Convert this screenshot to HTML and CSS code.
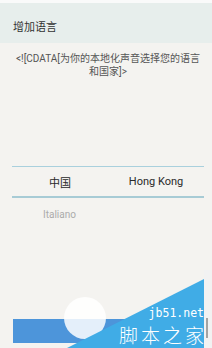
FILE: index.html
```html
<!DOCTYPE html>
<html lang="zh-CN">
<head>
<meta charset="utf-8">
<title>增加语言</title>
<link rel="stylesheet" href="styles.css">
</head>
<body>
<div class="app">
  <div class="topstrip"></div>
  <header class="bar"><h1 class="title">增加语言</h1></header>
  <p class="hint">&lt;![CDATA[为你的本地化声音选择您的语言<br>和国家]&gt;</p>
  <div class="picker">
    <div class="cell">中国</div>
    <div class="cell">Hong Kong</div>
  </div>
  <div class="option">Italiano</div>
  <button class="ok" aria-label="确定"></button>
</div>
<div class="watermark">
  <svg class="wm-shape" width="212" height="348" viewBox="0 0 212 348">
    <rect x="204" y="270" width="8" height="78" fill="#f2f2f2"/>
    <rect x="206.5" y="318" width="1" height="20" fill="#555"/>
    <circle cx="85" cy="318" r="21" fill="#ffffff" fill-opacity="0.85"/>
    <polygon points="204,279 204,348 67,348" fill="#40ace6"/>
  </svg>
  <span class="wm-url">jb51.net</span>
  <span class="wm-name">脚本之家</span>
</div>
</body>
</html>
```
FILE: styles.css
```css
html, body {
  margin: 0;
  padding: 0;
}
body {
  width: 212px;
  height: 348px;
  overflow: hidden;
  background: #f4f3f0;
  font-family: Roboto, "Noto Sans CJK SC", sans-serif;
  position: relative;
}
.app {
  display: flex;
  flex-direction: column;
  height: 348px;
}
.topstrip {
  height: 3px;
  background: #fafafa;
}
.bar {
  height: 40px;
  background: #e7eeec;
  display: flex;
  align-items: flex-end;
  padding: 0 13px 9px;
  box-sizing: border-box;
}
.title {
  margin: 0;
  font-size: 11px;
  line-height: 13px;
  font-weight: 400;
  color: #333;
}
.hint {
  margin: 9px 8px 0 12px;
  font-size: 10px;
  line-height: 13px;
  color: #555;
  text-align: center;
}
.picker {
  margin: 88px 8px 0 12px;
  display: flex;
  border-top: 1px solid #a9d0dd;
  border-bottom: 2px solid #a7cbd5;
  height: 29px;
  align-items: center;
}
.cell {
  flex: 1;
  text-align: center;
  font-size: 11px;
  color: #2a2a2a;
}
.option {
  margin: 11px 0 0 43px;
  font-size: 10px;
  line-height: 12px;
  color: #ababab;
}
.ok {
  margin: auto 13px 5px;
  height: 24px;
  border: none;
  padding: 0;
  background: #4d95da;
}
.watermark {
  position: absolute;
  left: 0;
  top: 0;
  width: 212px;
  height: 348px;
  pointer-events: none;
}
.wm-shape {
  display: block;
}
.wm-url {
  position: absolute;
  right: 8px;
  top: 307.5px;
  font-family: "DejaVu Sans Mono", monospace;
  font-size: 11.5px;
  line-height: 11px;
  color: #ffffff;
}
.wm-name {
  position: absolute;
  right: 5px;
  top: 324.5px;
  font-family: "Noto Sans CJK SC", sans-serif;
  font-weight: 300;
  font-size: 19px;
  line-height: 19px;
  color: #ffffff;
  letter-spacing: 3px;
}
```
